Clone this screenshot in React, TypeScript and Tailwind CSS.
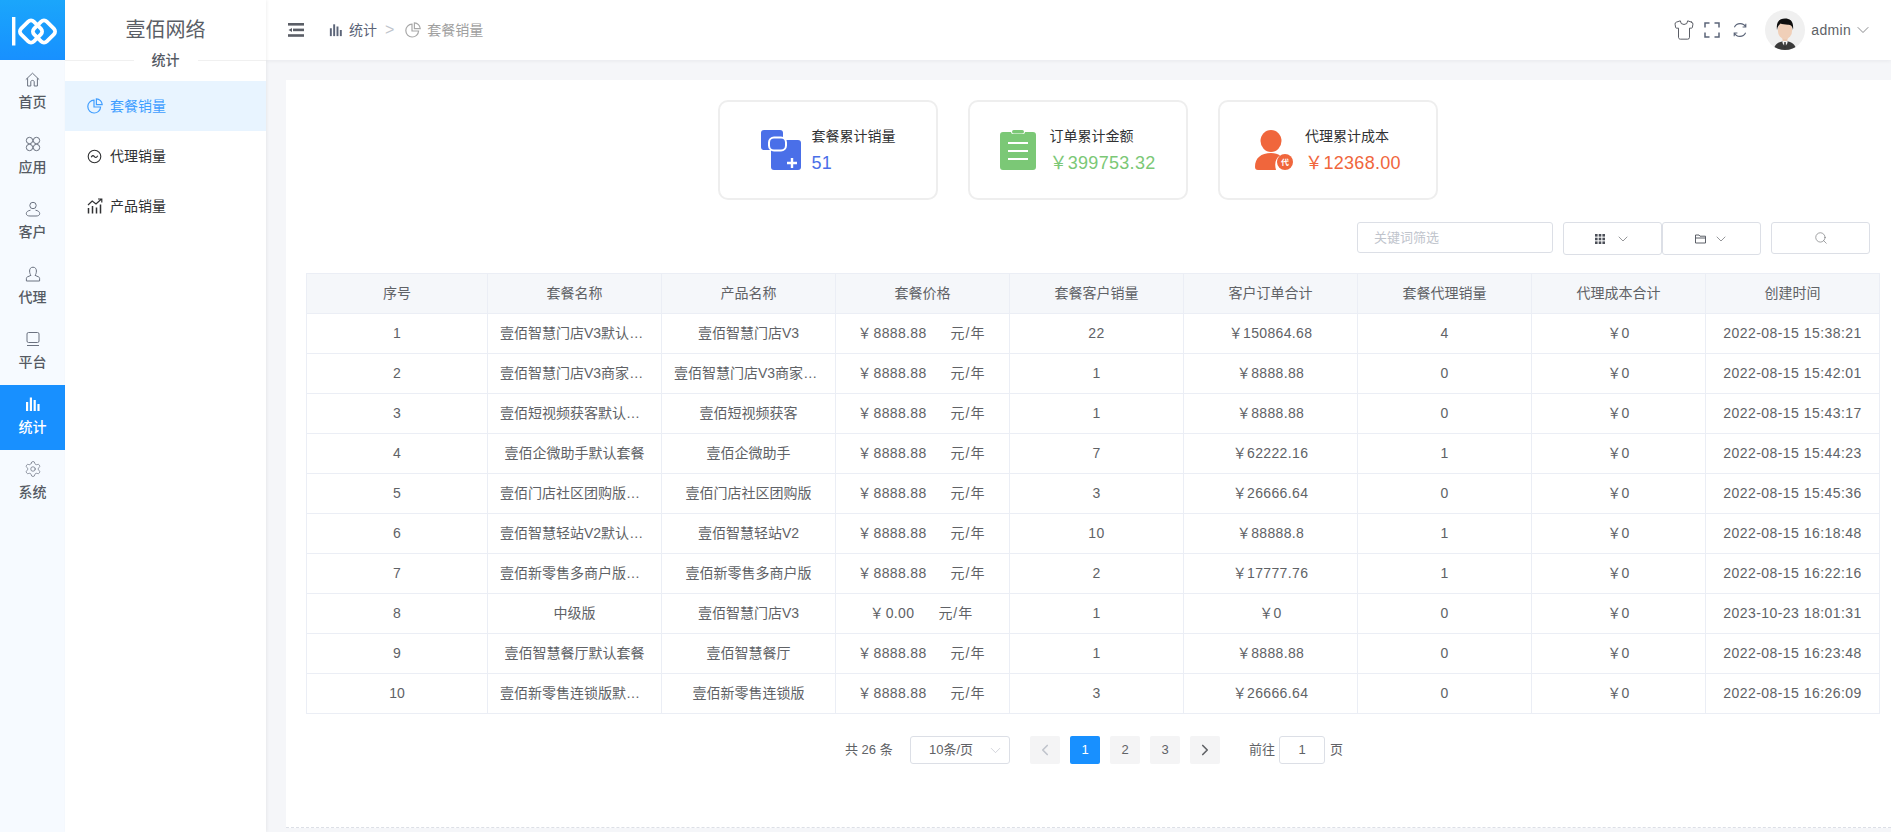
import React from "react";
import { ChevronDown, ChevronLeft, ChevronRight, Search, Shirt, Settings } from "lucide-react";

const font = "font-['Liberation_Sans','Noto_Sans_CJK_SC',sans-serif]";

function Logo() {
  return (
    <svg width="65" height="60" viewBox="0 0 65 60" fill="none">
      <rect x="12" y="17" width="3.4" height="28.5" fill="#fff" />
      <rect x="22" y="22.5" width="18" height="18" rx="4" stroke="#fff" strokeWidth="3.8" transform="rotate(45 31 31.5)" />
      <rect x="35" y="22.5" width="18" height="18" rx="4" stroke="#fff" strokeWidth="3.8" transform="rotate(45 44 31.5)" />
    </svg>
  );
}

function Bars({ color, size = 16 }: { color: string; size?: number }) {
  return (
    <svg width={size} height={size} viewBox="0 0 16 16" fill={color}>
      <rect x="1" y="6" width="2.2" height="9" />
      <rect x="4.8" y="1.5" width="2.2" height="13.5" />
      <rect x="8.6" y="4" width="2.2" height="11" />
      <rect x="12.4" y="8" width="2.2" height="7" />
    </svg>
  );
}

function HomeIcon() {
  return (
    <svg width="15" height="15" viewBox="0 0 15 15" fill="none" stroke="#6b7280" strokeWidth="1" strokeLinejoin="round">
      <path d="M0.8 7.6 L7.5 1.2 L14.2 7.6" />
      <path d="M2.6 6.2 V14 H5.8 V9.8 C5.8 8.9 6.6 8.4 7.5 8.4 C8.4 8.4 9.2 8.9 9.2 9.8 V14 H12.4 V6.2" />
    </svg>
  );
}

function Petals() {
  return (
    <svg width="16" height="16" viewBox="0 0 16 16" fill="none" stroke="#6b7280" strokeWidth="1">
      <circle cx="4.5" cy="4.5" r="3.2" />
      <circle cx="11.5" cy="4.5" r="3.2" />
      <circle cx="4.5" cy="11.5" r="3.2" />
      <circle cx="11.5" cy="11.5" r="3.2" />
    </svg>
  );
}

function Person() {
  return (
    <svg width="16" height="16" viewBox="0 0 16 16" fill="none" stroke="#6b7280" strokeWidth="1">
      <circle cx="8" cy="4.5" r="3.2" />
      <path d="M5.5 9.2 C2.8 9.6 1.3 11 1.3 12.6 C1.3 14.4 3 15 5 15 H11 C13 15 14.7 14.4 14.7 12.6 C14.7 11 13.2 9.6 10.5 9.2" />
    </svg>
  );
}

function Agent() {
  return (
    <svg width="16" height="16" viewBox="0 0 16 16" fill="none" stroke="#6b7280" strokeWidth="1">
      <path d="M8 1.2 C5.6 1.2 4.6 3 4.6 5 C4.6 7 5.2 8.4 6 9.3 L2.2 11 C1.6 11.3 1.4 11.8 1.4 12.4 V15 H14.6 V12.4 C14.6 11.8 14.4 11.3 13.8 11 L10 9.3 C10.8 8.4 11.4 7 11.4 5 C11.4 3 10.4 1.2 8 1.2 Z" />
    </svg>
  );
}

function Monitor() {
  return (
    <svg width="16" height="16" viewBox="0 0 16 16" fill="none" stroke="#6b7280" strokeWidth="1">
      <rect x="2" y="1.5" width="12" height="10" rx="1.5" />
      <path d="M2 14.5 H14" />
    </svg>
  );
}

function Pie({ color, size = 16 }: { color: string; size?: number }) {
  return (
    <svg width={size} height={size} viewBox="0 0 16 16" fill="none" stroke={color} strokeWidth="1.2">
      <path d="M7 2.2 A6.4 6.4 0 1 0 13.6 9 H7 Z" />
      <path d="M9.4 0.8 A6 6 0 0 1 15.2 6.6 H9.4 Z" />
    </svg>
  );
}

function Wave() {
  return (
    <svg width="15" height="15" viewBox="0 0 15 15" fill="none" stroke="#303133" strokeWidth="1.1">
      <circle cx="7.5" cy="7.5" r="6.3" />
      <path d="M4.2 8.3 C5.3 6.2 6.3 6.2 7.4 7.6 C8.5 9 9.6 8.6 10.8 6.8" />
    </svg>
  );
}

function Growth() {
  return (
    <svg width="16" height="16" viewBox="0 0 16 16" fill="none" stroke="#303133" strokeWidth="1.2">
      <path d="M1.5 15.5 V10 M5.5 15.5 V8 M9.5 15.5 V9.5 M13.5 15.5 V6.5" strokeWidth="1.5" />
      <path d="M1 7 L5.2 3 L9 6 L14.2 1.2 M11 1 H14.8 V4.6" />
    </svg>
  );
}

function Menu() {
  return (
    <svg width="16" height="14" viewBox="0 0 16 14" fill="#5a5e66">
      <rect x="0" y="0" width="16" height="2.6" />
      <rect x="0" y="11.2" width="16" height="2.6" />
      <rect x="5" y="5.6" width="11" height="2.6" />
      <path d="M0.5 6.9 L4 4.9 V8.9 Z" />
    </svg>
  );
}

function FullScreen() {
  return (
    <svg width="16" height="16" viewBox="0 0 16 16" fill="none" stroke="#5b6478" strokeWidth="1.5">
      <path d="M1 5.5 V1 H5.5 M10.5 1 H15 V5.5 M15 10.5 V15 H10.5 M5.5 15 H1 V10.5" />
    </svg>
  );
}

function Refresh() {
  return (
    <svg width="16" height="16" viewBox="0 0 16 16" fill="none" stroke="#5b6478" strokeWidth="1.1">
      <path d="M13.8 5 A6.4 6.4 0 0 0 2.4 5.2 M13.8 1.8 V5 H10.6" />
      <path d="M2.2 11 A6.4 6.4 0 0 0 13.6 10.8 M2.2 14.2 V11 H5.4" />
    </svg>
  );
}

function Avatar() {
  return (
    <svg width="40" height="40" viewBox="0 0 40 40">
      <clipPath id="av"><circle cx="20" cy="20" r="20" /></clipPath>
      <g clipPath="url(#av)">
        <rect width="40" height="40" fill="#f0f0f0" />
        <path d="M9 40 C9 34 14 31.5 20 31 C26 31.5 31 34 31 40 Z" fill="#3a3a3a" />
        <path d="M17.5 29 H22.5 V33 L20 37 L17.5 33 Z" fill="#f5f5f5" />
        <path d="M19.3 32 H20.7 L21 37 L20 38 L19 37 Z" fill="#333" />
        <rect x="17.5" y="25" width="5" height="6" fill="#eac8b0" />
        <ellipse cx="20" cy="20" rx="7.2" ry="9.2" fill="#f0cfb8" />
        <path d="M12 20 C10.8 11 15 8.5 20 8.5 C25 8.5 29 11 28 20 C27.4 16 25.5 14.8 23 14.8 C20 14.8 17 14.2 15.5 13.6 C14 15 12.6 16.5 12 20 Z" fill="#0f0f0f" />
      </g>
    </svg>
  );
}

const rail = [
  { label: "首页", icon: <HomeIcon /> },
  { label: "应用", icon: <Petals /> },
  { label: "客户", icon: <Person /> },
  { label: "代理", icon: <Agent /> },
  { label: "平台", icon: <Monitor /> },
  { label: "统计", icon: <Bars color="#fff" />, active: true },
  { label: "系统", icon: <Settings size={18} strokeWidth={1} color="#6b7280" /> },
];

const rows = [
  ["1", "壹佰智慧门店V3默认套餐版本", "壹佰智慧门店V3", "8888.88", "22", "150864.68", "4", "2022-08-15 15:38:21"],
  ["2", "壹佰智慧门店V3商家版默认套餐", "壹佰智慧门店V3商家版本套餐", "8888.88", "1", "8888.88", "0", "2022-08-15 15:42:01"],
  ["3", "壹佰短视频获客默认套餐版本", "壹佰短视频获客", "8888.88", "1", "8888.88", "0", "2022-08-15 15:43:17"],
  ["4", "壹佰企微助手默认套餐", "壹佰企微助手", "8888.88", "7", "62222.16", "1", "2022-08-15 15:44:23"],
  ["5", "壹佰门店社区团购版默认套餐", "壹佰门店社区团购版", "8888.88", "3", "26666.64", "0", "2022-08-15 15:45:36"],
  ["6", "壹佰智慧轻站V2默认套餐版本", "壹佰智慧轻站V2", "8888.88", "10", "88888.8", "1", "2022-08-15 16:18:48"],
  ["7", "壹佰新零售多商户版默认套餐", "壹佰新零售多商户版", "8888.88", "2", "17777.76", "1", "2022-08-15 16:22:16"],
  ["8", "中级版", "壹佰智慧门店V3", "0.00", "1", "0", "0", "2023-10-23 18:01:31"],
  ["9", "壹佰智慧餐厅默认套餐", "壹佰智慧餐厅", "8888.88", "1", "8888.88", "0", "2022-08-15 16:23:48"],
  ["10", "壹佰新零售连锁版默认套餐", "壹佰新零售连锁版", "8888.88", "3", "26666.64", "0", "2022-08-15 16:26:09"],
];

const heads = ["序号", "套餐名称", "产品名称", "套餐价格", "套餐客户销量", "客户订单合计", "套餐代理销量", "代理成本合计", "创建时间"];
const cellBorder = "border border-[#ebeef5] h-[40px] text-center";
const num = "tracking-[0.35px]";

function Card({ icon, title, value, color, gap }: { icon: React.ReactNode; title: string; value: string; color: string; gap: string }) {
  return (
    <div className={`w-[220px] h-[100px] border-2 border-[#eeeeee] rounded-[10px] flex items-center justify-center ${gap}`}>
      {icon}
      <div className="flex flex-col">
        <span className="text-[14px] leading-[20px] text-[#303133]">{title}</span>
        <span className={`text-[18px] leading-[24px] mt-[5px] tracking-[0.3px] ${color}`}>{value}</span>
      </div>
    </div>
  );
}

export default function App() {
  return (
    <div className={`flex w-[1891px] h-[832px] overflow-hidden bg-[#f5f6f9] text-[14px] text-[#606266] ${font}`}>
      <aside className="w-[65px] shrink-0 bg-[#f6faff] flex flex-col">
        <div className="h-[60px] bg-gradient-to-b from-[#1ba6fb] to-[#1890ff]">
          <Logo />
        </div>
        {rail.map((r) => (
          <div
            key={r.label}
            className={`h-[65px] flex flex-col items-center pt-[11px] ${r.active ? "bg-[#1890ff] text-white" : "text-[#555a63]"}`}
          >
            <div className="h-[16px] flex items-center justify-center">{r.icon}</div>
            <span className="mt-[5px] text-[14px] leading-[20px] font-medium">{r.label}</span>
          </div>
        ))}
      </aside>

      <nav className="w-[201px] shrink-0 bg-white shadow-[1px_0_3px_rgba(0,0,0,0.06)] z-10 flex flex-col">
        <div className="h-[60px] flex items-center justify-center text-[20px] text-[#5a5e66]">壹佰网络</div>
        <div className="h-px bg-[#f0f0f0] flex justify-center items-center">
          <span className="bg-white px-[18px] text-[14px] font-medium text-[#555a63]">统计</span>
        </div>
        <div className="mt-[20px] flex flex-col">
          <div className="h-[50px] bg-[#e8f4ff] flex items-center pl-[22px] gap-[7px] text-[#409eff]">
            <Pie color="#409eff" />
            <span>套餐销量</span>
          </div>
          <div className="h-[50px] flex items-center pl-[22px] gap-[8px] text-[#303133]">
            <Wave />
            <span>代理销量</span>
          </div>
          <div className="h-[50px] flex items-center pl-[22px] gap-[7px] text-[#303133]">
            <Growth />
            <span>产品销量</span>
          </div>
        </div>
      </nav>

      <main className="flex-1 min-w-0 flex flex-col">
        <header className="h-[60px] shrink-0 bg-white shadow-[0_1px_4px_rgba(0,21,41,0.06)] flex items-center pl-[22px] pr-[18px]">
          <Menu />
          <div className="ml-[25px]"><Bars color="#5b6478" size={14} /></div>
          <span className="ml-[6px] text-[#5b6478]">统计</span>
          <span className="ml-[8px] text-[16px] text-[#c0c4cc]">&gt;</span>
          <div className="ml-[11px]"><Pie color="#a8a8a8" /></div>
          <span className="ml-[6px] text-[#a0a0a0]">套餐销量</span>
          <div className="flex-1" />
          <Shirt size={22} strokeWidth={1} color="#4b4f58" />
          <div className="ml-[9px]"><FullScreen /></div>
          <div className="ml-[12px]"><Refresh /></div>
          <div className="ml-[17px]"><Avatar /></div>
          <span className="ml-[6px] text-[14px] tracking-[0.3px] text-[#606266]">admin</span>
          <ChevronDown size={20} strokeWidth={0.9} color="#606266" className="ml-[2px]" />
        </header>

        <section className="mt-[20px] ml-[20px] h-[748px] bg-white border-b border-dashed border-[#dcdfe6] flex flex-col">
          <div className="mt-[20px] pr-[21px] flex justify-center gap-[30px]">
            <Card
              color="text-[#4a6fe8]"
              gap="gap-[11px]"
              title="套餐累计销量"
              value="51"
              icon={
                <svg width="40" height="40" viewBox="0 0 40 40">
                  <rect x="0" y="0" width="22" height="20" rx="3" fill="#4a6fe8" />
                  <rect x="10" y="10" width="30" height="30" rx="3" fill="#4a6fe8" />
                  <rect x="8" y="7.5" width="17" height="13" rx="5" fill="#4a6fe8" stroke="#fff" strokeWidth="2" />
                  <path d="M26 33 H36 M31 28 V38" stroke="#fff" strokeWidth="2.4" />
                </svg>
              }
            />
            <Card
              color="text-[#7bc876]"
              gap="gap-[13px]"
              title="订单累计金额"
              value="￥399753.32"
              icon={
                <svg width="36" height="40" viewBox="0 0 36 40">
                  <path d="M3 2 H11 Q11 4 13 4 H23 Q25 4 25 2 H33 Q36 2 36 5 V37 Q36 40 33 40 H3 Q0 40 0 37 V5 Q0 2 3 2 Z" fill="#7bc876" />
                  <rect x="12" y="0" width="12" height="3.4" rx="1.7" fill="#7bc876" />
                  <path d="M8 13 H28 M8 21 H28 M8 29 H28" stroke="#fff" strokeWidth="2.2" />
                </svg>
              }
            />
            <Card
              color="text-[#f0663c]"
              gap="gap-[12px]"
              title="代理累计成本"
              value="￥12368.00"
              icon={
                <svg width="38" height="40" viewBox="0 0 38 40">
                  <ellipse cx="16" cy="11" rx="10.5" ry="11" fill="#f0663c" />
                  <path d="M0 37 C0 28 6 23 16 23 C20 23 23 24 25 25.5 C21 28 19 33 21 40 H3 Q0 40 0 37 Z" fill="#f0663c" />
                  <circle cx="30" cy="32" r="8" fill="#f0663c" />
                  <text x="30" y="35" textAnchor="middle" fontSize="8" fill="#fff" fontWeight="700">代</text>
                </svg>
              }
            />
          </div>

          <div className="mt-[22px] pr-[21px] flex justify-end items-start">
            <div className="w-[196px] h-[31px] border border-[#dcdfe6] rounded-[3px] flex items-center pl-[16px] text-[13px] text-[#c0c4cc]">
              关键词筛选
            </div>
            <div className="ml-[10px] w-[99px] h-[33px] border border-[#dcdfe6] rounded-[3px] flex items-center justify-center gap-[10px]">
              <svg width="10" height="10" viewBox="0 0 10 10" fill="#4b4f58">
                <rect x="0" y="0" width="2.6" height="2.6" /><rect x="3.7" y="0" width="2.6" height="2.6" /><rect x="7.4" y="0" width="2.6" height="2.6" />
                <rect x="0" y="3.7" width="2.6" height="2.6" /><rect x="3.7" y="3.7" width="2.6" height="2.6" /><rect x="7.4" y="3.7" width="2.6" height="2.6" />
                <rect x="0" y="7.4" width="2.6" height="2.6" /><rect x="3.7" y="7.4" width="2.6" height="2.6" /><rect x="7.4" y="7.4" width="2.6" height="2.6" />
              </svg>
              <ChevronDown size={16} strokeWidth={1} color="#606266" />
            </div>
            <div className="w-[99px] h-[33px] border border-[#dcdfe6] rounded-[3px] flex items-center justify-center gap-[7px]">
              <svg width="11" height="10" viewBox="0 0 11 10" fill="none" stroke="#4b4f58" strokeWidth="0.9">
                <path d="M0.5 1 H4 L5 2.2 H10.5 V9 H0.5 Z M0.5 4 H10.5" />
              </svg>
              <ChevronDown size={16} strokeWidth={1} color="#606266" />
            </div>
            <div className="ml-[10px] w-[99px] h-[32px] border border-[#dcdfe6] rounded-[3px] flex items-center justify-center">
              <Search size={14} strokeWidth={1} color="#606266" />
            </div>
          </div>

          <div className="mt-[18px] ml-[20px] w-[1573px]">
            <table className="w-[1573px] table-fixed border-collapse">
              <colgroup>
                <col className="w-[181px]" />
                <col className="w-[174px]" /><col className="w-[174px]" /><col className="w-[174px]" />
                <col className="w-[174px]" /><col className="w-[174px]" /><col className="w-[174px]" />
                <col className="w-[174px]" /><col className="w-[174px]" />
              </colgroup>
              <thead>
                <tr>
                  {heads.map((h) => (
                    <th key={h} className={`${cellBorder} bg-[#f5f7fa] font-normal text-[#606266]`}>{h}</th>
                  ))}
                </tr>
              </thead>
              <tbody>
                {rows.map((r) => (
                  <tr key={r[0]}>
                    <td className={cellBorder}>{r[0]}</td>
                    <td className={`${cellBorder} px-[12px]`}><div className="truncate">{r[1]}</div></td>
                    <td className={`${cellBorder} px-[12px]`}><div className="truncate">{r[2]}</div></td>
                    <td className={cellBorder}>
                      <span>￥</span>
                      <span className={`ml-[2px] ${num}`}>{r[3]}</span>
                      <span className="ml-[24px] mr-[2px] tracking-[1px]">元/年</span>
                    </td>
                    <td className={`${cellBorder} ${num}`}>{r[4]}</td>
                    <td className={`${cellBorder} ${num}`}>￥{r[5]}</td>
                    <td className={`${cellBorder} ${num}`}>{r[6]}</td>
                    <td className={`${cellBorder} ${num}`}>￥0</td>
                    <td className={`${cellBorder} tracking-[0.45px]`}>{r[7]}</td>
                  </tr>
                ))}
              </tbody>
            </table>
          </div>

          <div className="mt-[22px] ml-[559px] flex items-center h-[28px] text-[13px]">
            <span className="w-[65px]">共 26 条</span>
            <div className="w-[100px] h-[28px] border border-[#dcdfe6] rounded-[3px] flex items-center pl-[18px] pr-[5px] justify-between">
              <span>10条/页</span>
              <ChevronDown size={17} strokeWidth={1} color="#c0c4cc" />
            </div>
            <div className="ml-[20px] w-[30px] h-[28px] bg-[#f4f4f5] rounded-[2px] flex items-center justify-center">
              <ChevronLeft size={18} strokeWidth={2.2} color="#c0c4cc" />
            </div>
            <div className="ml-[10px] w-[30px] h-[28px] bg-[#1890ff] rounded-[2px] flex items-center justify-center text-white">1</div>
            <div className="ml-[10px] w-[30px] h-[28px] bg-[#f4f4f5] rounded-[2px] flex items-center justify-center">2</div>
            <div className="ml-[10px] w-[30px] h-[28px] bg-[#f4f4f5] rounded-[2px] flex items-center justify-center">3</div>
            <div className="ml-[10px] w-[30px] h-[28px] bg-[#f4f4f5] rounded-[2px] flex items-center justify-center">
              <ChevronRight size={18} strokeWidth={2.2} color="#606266" />
            </div>
            <span className="ml-[29px]">前往</span>
            <div className="ml-[4px] w-[46px] h-[28px] border border-[#dcdfe6] rounded-[3px] flex items-center justify-center">1</div>
            <span className="ml-[5px]">页</span>
          </div>
        </section>
      </main>
    </div>
  );
}
